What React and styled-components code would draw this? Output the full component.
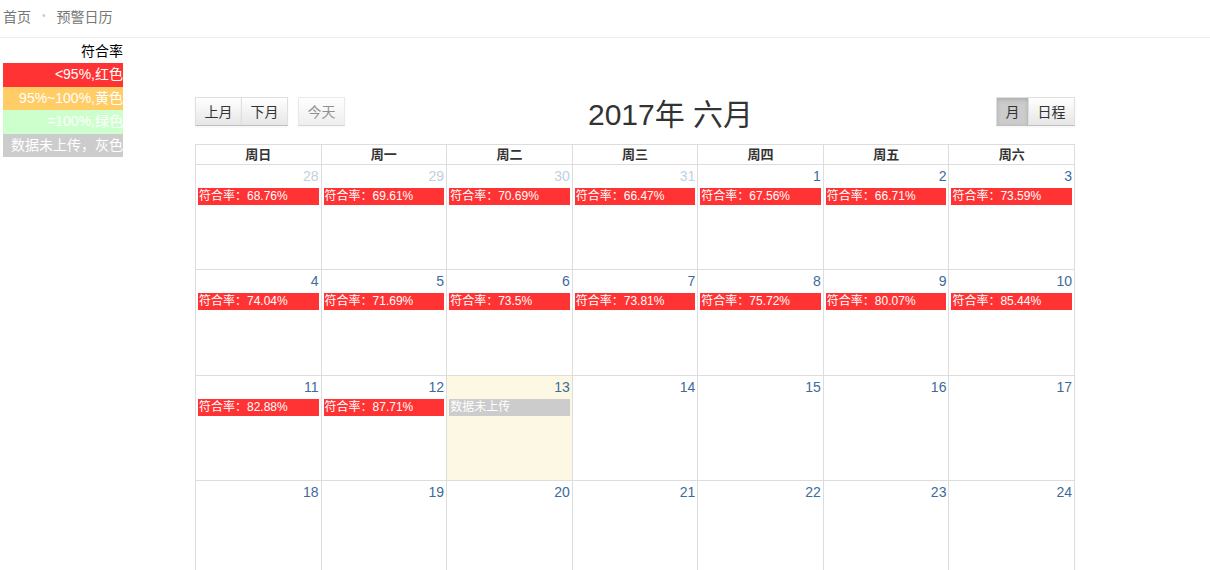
import React from 'react';
import styled, { createGlobalStyle, css } from 'styled-components';

const GlobalStyle = createGlobalStyle`
  body {
    margin: 0;
    background: #fff;
    font-family: "Liberation Sans", "Noto Sans CJK SC", sans-serif;
    font-size: 14px;
    color: #333;
  }
`;

const Page = styled.div`
  width: 1210px;
  height: 570px;
  overflow: hidden;
`;

const Breadcrumb = styled.div`
  height: 38px;
  border-bottom: 1px solid #eee;
  display: flex;
  align-items: center;
  padding-left: 3px;
  padding-bottom: 6px;
  box-sizing: border-box;
  font-size: 14px;
  color: #777;
`;

const Dot = styled.span`
  color: #ccc;
  margin: 0 11px;
  font-size: 10px;
`;

const Body = styled.div`
  display: flex;
  align-items: flex-start;
`;

const Legend = styled.div`
  width: 120px;
  margin: 3px 0 0 3px;
  display: flex;
  flex-direction: column;
`;

const LegendTitle = styled.div`
  text-align: right;
  font-size: 14px;
  color: #000;
  height: 21px;
  line-height: 21px;
  margin-bottom: 1px;
`;

const LegendRow = styled.div`
  height: 23.5px;
  line-height: 23px;
  text-align: right;
  color: #fff;
  font-size: 14px;
  white-space: nowrap;
  overflow: hidden;
  background: ${p => p.$bg};
`;

const Calendar = styled.div`
  width: 880px;
  margin: 58px 0 0 72px;
`;

const Toolbar = styled.div`
  display: flex;
  align-items: center;
  height: 30px;
  margin-bottom: 18px;
`;

const Group = styled.div`
  display: flex;
  gap: ${p => p.$gap || 0}px;
`;

const ButtonSet = styled.div`
  display: flex;
`;

const Button = styled.button`
  height: 29px;
  padding: 0 8.5px;
  font-family: inherit;
  font-size: 14px;
  color: #333;
  border: 1px solid;
  border-color: #e0e0e0 #e0e0e0 #bfbfbf;
  background: linear-gradient(#fff, #e6e6e6);
  box-shadow: inset 0 1px 0 rgba(255, 255, 255, 0.2), 0 1px 2px rgba(0, 0, 0, 0.05);
  margin-left: ${p => (p.$joined ? '-1px' : '0')};
  ${p =>
    p.$disabled &&
    css`
      opacity: 0.65;
      color: #555;
    `}
  ${p =>
    p.$active &&
    css`
      background: #ccc;
      box-shadow: inset 0 2px 4px rgba(0, 0, 0, 0.15), 0 1px 2px rgba(0, 0, 0, 0.05);
    `}
`;

const Title = styled.h2`
  flex: 1;
  margin: 0;
  text-align: center;
  font-size: 30px;
  font-weight: normal;
  color: #333;
  padding-top: 1px;
`;

const Grid = styled.div`
  display: grid;
  grid-template-columns: repeat(7, 1fr);
  border-left: 1px solid #ddd;
  border-top: 1px solid #ddd;
`;

const HeadCell = styled.div`
  height: 19px;
  line-height: 19px;
  text-align: center;
  font-weight: bold;
  font-size: 13px;
  border-right: 1px solid #ddd;
  border-bottom: 1px solid #ddd;
`;

const DayCell = styled.div`
  height: 104.4px;
  border-right: 1px solid #ddd;
  border-bottom: 1px solid #ddd;
  background: ${p => (p.$today ? '#fcf8e3' : '#fff')};
  display: flex;
  flex-direction: column;
`;

const DayNum = styled.div`
  text-align: right;
  padding: 2px 2px 0;
  height: 19px;
  line-height: 19px;
  font-size: 14px;
  color: ${p => (p.$other ? '#bfd0e0' : '#3d6b9b')};
`;

const Event = styled.div`
  margin: 2px 2px 0;
  height: 17px;
  line-height: 17px;
  padding-left: 1px;
  font-size: 12px;
  color: #fff;
  background: ${p => p.$bg};
  white-space: nowrap;
  overflow: hidden;
`;

const legend = [
  { text: '<95%,红色', bg: '#ff3333' },
  { text: '95%~100%,黄色', bg: '#ffcc66' },
  { text: '=100%,绿色', bg: '#ccffcc' },
  { text: '数据未上传，灰色', bg: '#cccccc' },
];

const weekdays = ['周日', '周一', '周二', '周三', '周四', '周五', '周六'];

const rates = {
  '5-28': '68.76%', '5-29': '69.61%', '5-30': '70.69%', '5-31': '66.47%',
  '6-1': '67.56%', '6-2': '66.71%', '6-3': '73.59%', '6-4': '74.04%',
  '6-5': '71.69%', '6-6': '73.5%', '6-7': '73.81%', '6-8': '75.72%',
  '6-9': '80.07%', '6-10': '85.44%', '6-11': '82.88%', '6-12': '87.71%',
};

const days = [];
[28, 29, 30, 31].forEach(d => days.push({ month: 5, day: d }));
for (let d = 1; d <= 24; d++) days.push({ month: 6, day: d });

const App = () => (
  <Page>
    <GlobalStyle />
    <Breadcrumb>
      首页<Dot>•</Dot>预警日历
    </Breadcrumb>
    <Body>
      <Legend>
        <LegendTitle>符合率</LegendTitle>
        {legend.map(item => (
          <LegendRow key={item.text} $bg={item.bg}>{item.text}</LegendRow>
        ))}
      </Legend>
      <Calendar>
        <Toolbar>
          <Group $gap={10}>
            <ButtonSet>
              <Button>上月</Button>
              <Button $joined>下月</Button>
            </ButtonSet>
            <Button $disabled>今天</Button>
          </Group>
          <Title>2017年 六月</Title>
          <Group>
            <ButtonSet>
              <Button $active>月</Button>
              <Button $joined>日程</Button>
            </ButtonSet>
          </Group>
        </Toolbar>
        <Grid>
          {weekdays.map(w => (
            <HeadCell key={w}>{w}</HeadCell>
          ))}
          {days.map(({ month, day }) => {
            const key = `${month}-${day}`;
            const rate = rates[key];
            return (
              <DayCell key={key} $today={key === '6-13'}>
                <DayNum $other={month !== 6}>{day}</DayNum>
                {rate && <Event $bg="#ff3333">符合率：{rate}</Event>}
                {key === '6-13' && <Event $bg="#cccccc">数据未上传</Event>}
              </DayCell>
            );
          })}
        </Grid>
      </Calendar>
    </Body>
  </Page>
);

export default App;
